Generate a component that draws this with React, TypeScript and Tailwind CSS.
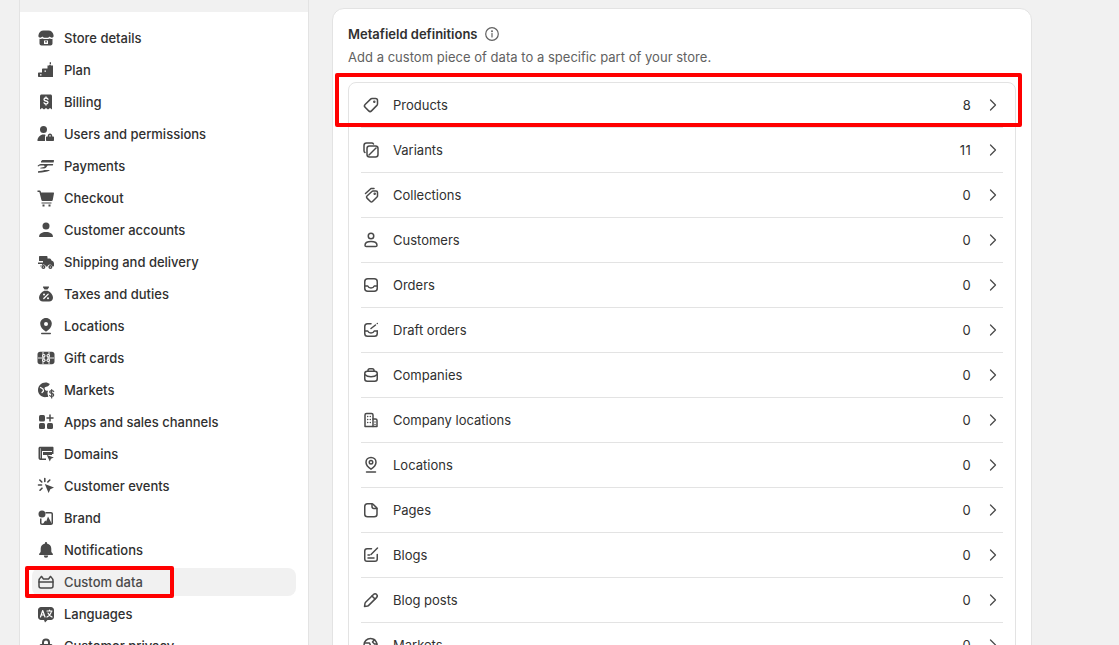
import React from "react";
import { ChevronRight } from "lucide-react";

type IconProps = { children: React.ReactNode };

// filled 20px glyphs for the settings nav
function Solid({ children }: IconProps) {
  return (
    <svg viewBox="0 0 20 20" className="w-5 h-5 shrink-0 text-[#4a4a4a]" fill="currentColor" fillRule="evenodd">
      {children}
    </svg>
  );
}

// outlined 20px glyphs for the metafield list
function Line({ children }: IconProps) {
  return (
    <svg viewBox="0 0 20 20" className="w-5 h-5 shrink-0 text-[#4a4a4a]" fill="none" stroke="currentColor" strokeWidth="1.5" strokeLinecap="round" strokeLinejoin="round">
      {children}
    </svg>
  );
}

const navItems: { label: string; icon: React.ReactNode; active?: boolean }[] = [
  { label: "Store details", icon: <Solid><path d="M7.500 2.500h5c2.500 0 4.700 2 5 4.600l.1 1c0 1-.9 1.600-1.800 1.600-.8 0-1.600-.4-2-1.100-.5.700-1.200 1.100-2 1.100H8.200c-.8 0-1.500-.4-2-1.100-.4.700-1.200 1.100-2 1.100-.9 0-1.800-.6-1.800-1.600l.1-1c.3-2.600 2.500-4.600 5-4.600Z" /><path d="M3.500 10.800c1 .3 2.200.2 3-.3.7.4 1.500.6 2.500.6h2c1 0 1.800-.2 2.500-.6.8.5 2 .6 3 .3V15.500c0 1.100-.9 2-2 2h-9c-1.100 0-2-.9-2-2v-4.700ZM8 12.500v3.500h4v-3.500H8Z" /><rect x="9.300" y="13" width="1.400" height="1.600" /></Solid> },
  { label: "Plan", icon: <Solid><path d="M13.700 2.200h1.300v2h-1.300zM11.500 5.500h1.500l1-1 1 1h2v11.500H3c-.6 0-1-.4-1-1v-2.500c0-.6.400-1 1-1h3V9.500c0-.6.400-1 1-1h4.500v-3ZM4 14.300v1.200h1.500v-1.200H4Zm4.500-3.800v1.200H10v-1.200H8.500Z" /></Solid> },
  { label: "Billing", icon: <Solid><path d="M5.500 2.500h9c.8 0 1.500.7 1.500 1.500v13.500l-2-1.500-2 1.500-2-1.500-2 1.500-2-1.500-2 1.500V4c0-.8.700-1.500 1.500-1.500Z" /><path d="M10 5v1M10 12v1M12 7.200c-.3-.7-1-1.200-2-1.200-1.100 0-2 .6-2 1.500s.8 1.300 2 1.500c1.200.2 2 .6 2 1.500S11.100 12 10 12c-1 0-1.700-.5-2-1.200" fill="none" stroke="#fff" strokeWidth="1.300" strokeLinecap="round" /></Solid> },
  { label: "Users and permissions", icon: <Solid><circle cx="7.500" cy="5.500" r="3.500" /><path d="M2 17c-.5 0-.700-.3-.6-.8C2 13 4.300 10.500 7.500 10.500c.8 0 1.600.1 2.200.4-.4.500-.7 1.100-.7 1.800V17H2Z" /><path d="M11 12.500h.8v-.8c0-1.200 1-2.200 2.200-2.200s2.200 1 2.200 2.200v.8h.8c.6 0 1 .4 1 1V16c0 .6-.4 1-1 1h-6c-.6 0-1-.4-1-1v-2.500c0-.6.400-1 1-1Zm2.300 0h1.400v-.8c0-.4-.3-.7-.7-.7s-.7.300-.7.700v.8Z" /></Solid> },
  { label: "Payments", icon: <Solid><path d="M5 5.500C5.300 4.600 6 4 7 4h10.500c.4 0 .6.300.5.700l-.4 1.800H5V5.500ZM4.800 8h12.400l-.4 1.500H12c-.5 0-.8.3-1 .7-.4 1.200-1.500 2-3 2.300H4.500c-.4 0-.4-.6 0-.7L8 11c.5-.1.700-.5.500-1-.1-.3-.4-.5-.7-.5H4.600C3.700 9.500 2.900 10 2.300 10.600L1.500 9.900C2.300 9 3.400 8.100 4.800 8ZM2 15.200c2.500-.1 4.500-.4 6.500-1.200h4.800c.4 0 .4.600 0 .8-2.500 1.200-6 1.700-11.300 1.900v-1.500Z" /></Solid> },
  { label: "Checkout", icon: <Solid><path d="M1.500 2.500h1.700c.8 0 1.500.5 1.700 1.300L5 4.500h12.500c.4 0 .6.300.5.700l-1.300 7c-.1.500-.5.800-1 .8H6.500c-.5 0-.9-.3-1-.8L3.500 4.400c0-.2-.2-.4-.4-.4H1.500V2.500Z" /><rect x="5.500" y="14.500" width="10" height="1" /><rect x="6.500" y="16.500" width="2" height="2" /><rect x="12.500" y="16.500" width="2" height="2" /></Solid> },
  { label: "Customer accounts", icon: <Solid><circle cx="10" cy="6" r="3.500" /><path d="M3 16.500c.3-2.800 3-4.500 7-4.500s6.700 1.700 7 4.500c0 .3-.2.500-.5.500h-13c-.3 0-.5-.2-.5-.5Z" /></Solid> },
  { label: "Shipping and delivery", icon: <Solid><path d="M3 5c0-.6.4-1 1-1h6.500c.6 0 1 .4 1 1v1.500h2.200c.5 0 1 .3 1.200.7l.6 1.300c1.400.4 2.500 1.600 2.500 3v2c0 .6-.4 1-1 1h-.5a2.700 2.700 0 0 0-5.200 0H10a2.700 2.700 0 0 0-5.200 0H4.500c-.4 0-.4-1 0-1h1.500v-1.500H2V10.500h5V9H3V5Z" /><circle cx="7.400" cy="15" r="2" /><circle cx="14.400" cy="15" r="2" /><circle cx="7.400" cy="15" r=".6" fill="#fff" /><circle cx="14.400" cy="15" r=".6" fill="#fff" /></Solid> },
  { label: "Taxes and duties", icon: <Solid><path d="M7.500 2.500h5c.4 0 .7.500.4.900L11.500 5.500h-3L7.100 3.400c-.3-.4 0-.9.400-.9Z" /><path d="M8.200 6.800h3.600c3 1.400 5.200 4.200 5.200 7 0 2.300-1.600 3.700-4 3.700H7c-2.400 0-4-1.400-4-3.700 0-2.800 2.200-5.600 5.200-7Z" /><path d="M7.800 14.500l4.400-4.400" stroke="#fff" strokeWidth="1.300" strokeLinecap="round" /><circle cx="8" cy="10.500" r="1" fill="#fff" /><circle cx="12" cy="14.200" r="1" fill="#fff" /></Solid> },
  { label: "Locations", icon: <Solid><path d="M10 2c3.300 0 5.800 2.500 5.800 5.700 0 3.200-2.500 6-5.800 8-3.300-2-5.800-4.800-5.800-8C4.200 4.500 6.700 2 10 2Zm0 4a2 2 0 1 0 0 4 2 2 0 0 0 0-4Z" /><rect x="5" y="16.800" width="10" height="1.400" rx=".7" /></Solid> },
  { label: "Gift cards", icon: <Solid><path d="M4 3.800h12c1.400 0 2.500 1.100 2.500 2.500v7.400c0 1.400-1.100 2.500-2.500 2.500H4c-1.400 0-2.500-1.100-2.500-2.500V6.300c0-1.400 1.100-2.500 2.500-2.500Z" /><path d="M2 10h16M7 4v12M13 4v12" fill="none" stroke="#fff" strokeWidth=".9" /><circle cx="7.800" cy="7.800" r="1.700" fill="#fff" /><circle cx="12.200" cy="7.800" r="1.700" fill="#fff" /><circle cx="7.800" cy="12.200" r="1.700" fill="#fff" /><circle cx="12.200" cy="12.200" r="1.700" fill="#fff" /><rect x="9" y="9" width="2" height="2" fill="currentColor" /><circle cx="7.800" cy="7.800" r=".7" /><circle cx="12.200" cy="7.800" r=".7" /><circle cx="7.800" cy="12.200" r=".7" /><circle cx="12.200" cy="12.200" r=".7" /></Solid> },
  { label: "Markets", icon: <Solid><path d="M9.500 2.500c1.700 0 3.200.6 4.400 1.500l-1.300 1.800c-.4.500-.9.700-1.500.8l-1.500.3c-.8.200-1.200.900-1 1.700l.3 1c.2.700.8 1.200 1.500 1.200h1.800c-.7 1.100-.9 2.400-.5 3.700l.6 2.300c-.7.200-1.500.3-2.300.3C5.400 17.500 2 14.100 2 10s3.400-7.500 7.500-7.500Z" /><path d="M4.500 7.500l2.500 1.500.5 2-1.500 1.500" fill="none" stroke="#fff" strokeWidth="1.200" strokeLinecap="round" strokeLinejoin="round" /><path d="M15.700 9.500v8.500M17.700 11.500c-.4-.6-1.100-1-2-1-1.200 0-2 .6-2 1.500 0 1.900 4 1 4 3 0 .9-.8 1.500-2 1.500-.9 0-1.600-.4-2-1" fill="none" stroke="currentColor" strokeWidth="1.200" strokeLinecap="round" /></Solid> },
  { label: "Apps and sales channels", icon: <Solid><rect x="3" y="3" width="6" height="6.500" rx="1.500" /><rect x="3" y="11" width="6" height="6" rx="1.500" /><rect x="11" y="11" width="6" height="6" rx="1.500" /><path d="M14 3v6M11 6h6" fill="none" stroke="currentColor" strokeWidth="1.500" strokeLinecap="round" /></Solid> },
  { label: "Domains", icon: <Solid><path d="M4 2.800h12.500c.6 0 1 .4 1 1V10h-1.500V7H6v7.500h4V16H4.500c-1.100 0-2-.9-2-2V4.300c0-.8.700-1.500 1.500-1.500Zm0 1.500V14c0 .3.200.5.500.5v-10.200H4Z" /><rect x="7" y="8" width="9" height="3" /><path d="M10.800 11l7 2.600-2.800 1.100-1.200 2.800-3-6.500Z" /></Solid> },
  { label: "Customer events", icon: <Solid><path d="M8.800 8l9.200 3.600-3.700 1.700-1.700 3.700L8.800 8Z" /><path d="M8.800 2.500v3M3.800 4l2 2M2.500 9h3M4 14.200l2-2M13.800 4l-2 2" fill="none" stroke="currentColor" strokeWidth="1.600" strokeLinecap="round" /></Solid> },
  { label: "Brand", icon: <Solid><circle cx="6" cy="6" r="3.500" /><path d="M9.500 4H15c1 0 2 .9 2 2v9c0 1.100-1 2-2 2H6c-1.100 0-2-.9-2-2v-4.500h1.500V15c0 .3.200.5.500.5h9c.3 0 .5-.2.5-.5V6c0-.3-.2-.5-.5-.5H9.500V4Z" /><path d="M12 8.500l4 7.500H7l2.200-3.500 1 1L12 8.500Z" /></Solid> },
  { label: "Notifications", icon: <Solid><path d="M10 2c.6 0 1 .4 1 1v.6c2.500.5 4.300 2.600 4.300 5.200v2.500c0 .6.200 1.100.6 1.500l.9 1c.5.500.2 1.200-.5 1.200H3.700c-.7 0-1-.7-.5-1.200l.9-1c.4-.4.6-.9.600-1.500V8.800c0-2.600 1.800-4.700 4.300-5.200V3c0-.6.400-1 1-1Z" /><path d="M7.800 15.500h4.400a2.200 2.200 0 0 1-4.400 0Z" /></Solid> },
  { label: "Custom data", active: true, icon: <Line><path d="M5.500 4.500C4.500 5.500 3 6.500 3 8.500v5.500c0 1.100.9 2 2 2h10c1.100 0 2-.9 2-2V8.500c0-2-1.500-3-2.500-4" /><path d="M5.500 4.500 7.500 7h5l2-2.500" /><path d="M3 10h14" /></Line> },
  { label: "Languages", icon: <Solid><path d="M5 3h10c1.600 0 3 1.400 3 3v7c0 1.600-1.400 3-3 3h-3.500L9 18.500 8 16H5c-1.600 0-3-1.400-3-3V6c0-1.600 1.400-3 3-3Z" /><path d="M4.500 13l2.200-6.500 2.300 6.500M5.300 11h2.800M11 7h5M13.500 6v1M15.500 7c-.5 2.700-2 4.700-4.500 6M12 9c.8 1.700 2.300 3.100 4 4" fill="none" stroke="#fff" strokeWidth="1.200" strokeLinecap="round" strokeLinejoin="round" /></Solid> },
  { label: "Customer privacy", icon: <Solid><path d="M6 8V6.500a4 4 0 0 1 8 0V8h1c.8 0 1.500.7 1.500 1.500V16c0 .8-.7 1.500-1.500 1.500H5c-.8 0-1.500-.7-1.500-1.500V9.500C3.500 8.700 4.200 8 5 8h1Zm2 0h4V6.500a2 2 0 0 0-4 0V8Z" /></Solid> },
];

const metafieldRows: { label: string; count: number; icon: React.ReactNode }[] = [
  { label: "Products", count: 8, icon: <Line><path d="M11 3.500h3.500c1.100 0 2 .9 2 2V9c0 .5-.2 1-.6 1.400l-5.400 5.500c-.8.800-2 .8-2.800 0l-3.600-3.600c-.8-.8-.8-2 0-2.800l5.500-5.400c.4-.4.900-.6 1.400-.6Z" /><circle cx="13.300" cy="6.700" r=".5" fill="currentColor" /></Line> },
  { label: "Variants", count: 11, icon: <Line><path d="M4 12.500c-.6-.3-1-1-1-1.700V5.500C3 4.100 4.100 3 5.500 3h5.300c.7 0 1.400.4 1.700 1" /><rect x="6" y="6" width="11" height="11" rx="2.500" /><path d="M8 15l7-7" /></Line> },
  { label: "Collections", count: 0, icon: <Line><path d="M4.500 8.500 10 3.500h3" /><path d="M12 6h3c.8 0 1.500.7 1.500 1.500V11c0 .4-.2.800-.5 1l-4.500 4.500c-.6.600-1.500.6-2.100 0l-3.400-3.400c-.6-.6-.6-1.500 0-2.100L10.900 6.500c.3-.3.700-.5 1.100-.5Z" /><circle cx="13.700" cy="8.800" r=".5" fill="currentColor" /></Line> },
  { label: "Customers", count: 0, icon: <Line><circle cx="10" cy="6" r="2.750" /><path d="M4 15.200c0-2.300 2.600-3.700 6-3.700s6 1.400 6 3.700c0 .8-.6 1.300-1.300 1.300H5.300c-.7 0-1.300-.5-1.300-1.300Z" /></Line> },
  { label: "Orders", count: 0, icon: <Line><rect x="3.750" y="3.750" width="12.500" height="12.500" rx="3" /><path d="M3.750 11h3c.5 1.200 1.800 2 3.250 2s2.750-.8 3.250-2h3" /></Line> },
  { label: "Draft orders", count: 0, icon: <Line><path d="M10 3.750H6.500c-1.500 0-2.750 1.200-2.750 2.750v7c0 1.500 1.200 2.750 2.750 2.750h7c1.500 0 2.750-1.200 2.750-2.750V11" /><path d="M3.750 11h3c.5 1.200 1.800 2 3.250 2s2.750-.8 3.250-2h3" /><path d="M10 8.500 14.500 5M16.300 3.500h.01" /></Line> },
  { label: "Companies", count: 0, icon: <Line><rect x="3.750" y="6.250" width="12.500" height="10" rx="2.500" /><path d="M7 6.250V5.500c0-1 .8-1.750 1.750-1.750h2.500C12.200 3.750 13 4.500 13 5.500v.75" /><path d="M3.750 9.500c1.500 1.500 3.800 2.300 6.250 2.300s4.750-.8 6.250-2.300" /></Line> },
  { label: "Company locations", count: 0, icon: <Line><path d="M4 16.500V5c0-.8.700-1.500 1.500-1.500h5c.8 0 1.500.7 1.500 1.500v11.500H4Z" /><path d="M12 9h2.500c.8 0 1.500.7 1.500 1.500v6h-4" /><path d="M6.700 6.500h.01M9.300 6.500h.01M6.700 9.500h.01M9.300 9.500h.01M6.700 12.500h.01M9.300 12.500h.01M14 12h.01M14 14.500h.01" /></Line> },
  { label: "Locations", count: 0, icon: <Line><path d="M10 2.500c2.900 0 5 2.100 5 4.800 0 2.600-2.100 5-5 6.900-2.900-1.900-5-4.300-5-6.900C5 4.600 7.100 2.500 10 2.500Z" /><circle cx="10" cy="7.300" r="1.750" /><path d="M5.500 17h9" /></Line> },
  { label: "Pages", count: 0, icon: <Line><path d="M6.500 3.750h4.300c.5 0 1 .2 1.300.5l3.400 3.400c.3.300.5.800.5 1.300v5.300c0 1.500-1.200 2.500-2.750 2.500H6.500c-1.500 0-2.750-1-2.750-2.500v-7.750c0-1.500 1.200-2.750 2.750-2.750Z" /><path d="M11 4v2.500c0 1 .8 2 2 2h3" /></Line> },
  { label: "Blogs", count: 0, icon: <Line><path d="M10.500 3.750H6c-1.200 0-2.250 1-2.250 2.250v8c0 1.200 1 2.250 2.250 2.250h8c1.200 0 2.250-1 2.250-2.250V9.500" /><path d="M10 9.500 16.500 3M7 10h1.500M7 13h6" /></Line> },
  { label: "Blog posts", count: 0, icon: <Line><path d="M12.500 4.500c.9-.9 2.300-.9 3.100 0 .8.800.8 2.200-.1 3.100l-7.800 7.800c-.3.300-.7.500-1.100.6l-3.100.500.5-3.100c.1-.4.300-.8.600-1.100l7.900-7.800Z" /><path d="M11 6l3 3" /></Line> },
  { label: "Markets", count: 0, icon: <Line><circle cx="9.500" cy="10" r="6.500" /><path d="M3.500 8h5l1 2.500-3 3M13.500 4.500l-2 2.500 2 2h2.500" /></Line> },
];

function NavRow({ label, icon, active }: { label: string; icon: React.ReactNode; active?: boolean }) {
  return (
    <div className={`relative flex h-7 items-center gap-2 rounded-lg px-1 ${active ? "bg-[#f1f1f1]" : ""}`}>
      {icon}
      <span className={`text-[13px] leading-5 font-[450] ${active ? "text-[#4a4a4a]" : "text-[#303030]"}`}>{label}</span>
      {active && <div className="absolute -left-[7px] -top-[2px] h-8 w-[149px] rounded-[2px] border-4 border-[#ff0000]" />}
    </div>
  );
}

export default function App() {
  return (
    <div className="flex h-[645px] w-[1119px] overflow-hidden bg-[#f1f1f1] font-['Inter',sans-serif] text-[#303030]">
      {/* Settings nav */}
      <aside className="ml-[19px] flex w-[290px] shrink-0 flex-col border-x border-[#e3e3e3]">
        <div className="h-3 shrink-0 bg-[#f1f1f1]" />
        <nav className="flex flex-1 flex-col gap-1 bg-white px-3 pt-3">
          {navItems.map((item) => (
            <NavRow key={item.label} {...item} />
          ))}
        </nav>
      </aside>

      {/* Metafield definitions card */}
      <main className="ml-[23px] mt-2 w-[700px] shrink-0">
        <section className="rounded-xl border border-[#e3e3e3] bg-white px-[15px] pt-[15px] pb-4">
          <div className="flex h-5 items-center gap-1.5">
            <h2 className="text-[13px] leading-5 font-semibold text-[#303030]">Metafield definitions</h2>
            <svg viewBox="0 0 16 16" className="h-4 w-4 text-[#616161]" fill="none" stroke="currentColor" strokeWidth="1.200" strokeLinecap="round">
              <circle cx="8" cy="8" r="6.300" />
              <path d="M8 7.500v3.500" />
              <circle cx="8" cy="5.200" r=".4" fill="currentColor" />
            </svg>
          </div>
          <p className="mt-[3px] text-[13px] leading-5 tracking-[0.025px] text-[#616161]">Add a custom piece of data to a specific part of your store.</p>

          <div className="relative mt-[15px] rounded-lg border border-[#e3e3e3]">
            {metafieldRows.map((row) => (
              <div key={row.label} className="mx-3 flex h-[45px] items-center gap-3 border-b border-[#e3e3e3] pb-px">
                {row.icon}
                <span className="flex-1 text-[13px] leading-5 text-[#303030]">{row.label}</span>
                <span className="text-[13px] leading-5 tracking-[0.3px] text-[#303030]">{row.count}</span>
                <ChevronRight className="h-5 w-5 text-[#4a4a4a]" strokeWidth={1.5} size={20} />
              </div>
            ))}
            <div className="absolute -left-[14px] -top-[10px] h-[54px] w-[687px] rounded-[2px] border-4 border-[#ff0000]" />
          </div>
        </section>
      </main>
    </div>
  );
}
